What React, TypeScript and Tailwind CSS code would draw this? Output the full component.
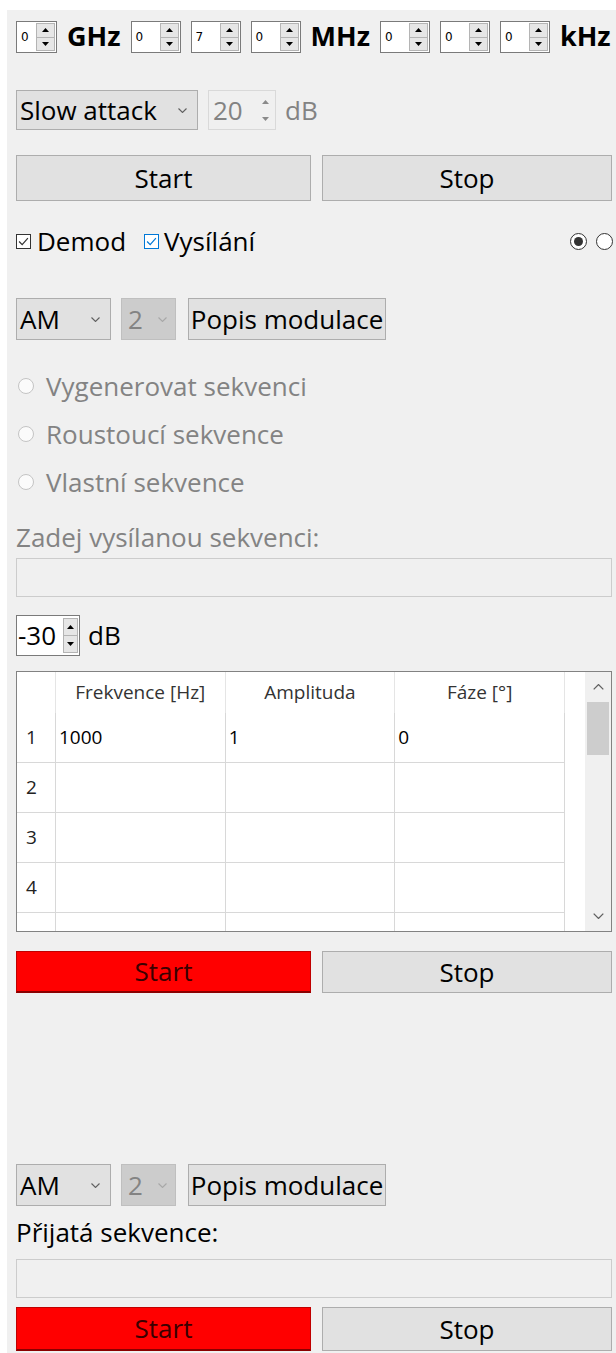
import React from 'react';

const ui = "font-['Open_Sans',sans-serif]";

// small filled triangle used inside spin box buttons
const Tri: React.FC<{ up?: boolean; color?: string }> = ({ up, color = '#000' }) => (
  <svg width="7" height="4" viewBox="0 0 7 4">
    <polygon points={up ? '0,4 3.5,0 7,4' : '0,0 7,0 3.5,4'} fill={color} />
  </svg>
);

const Chevron: React.FC<{ color?: string; up?: boolean; w?: number }> = ({ color = '#606060', up, w = 9 }) => (
  <svg width={w} height={Math.round(w / 1.8)} viewBox="0 0 9 5">
    <polyline points={up ? '0.5,4.5 4.5,0.5 8.5,4.5' : '0.5,0.5 4.5,4.5 8.5,0.5'} fill="none" stroke={color} strokeWidth="1.1" />
  </svg>
);

const Check: React.FC<{ color: string }> = ({ color }) => (
  <svg width="11" height="9" viewBox="0 0 10 8">
    <polyline points="1,4 3.8,6.8 9,1" fill="none" stroke={color} strokeWidth="1.1" />
  </svg>
);

const TinySpin: React.FC<{ value: string; className: string }> = ({ value, className }) => (
  <div className={`${className} h-[32px] flex border border-[#7a7a7a] bg-white`}>
    <span className="flex-1 pl-[4px] flex items-center text-[12px] font-['DejaVu_Sans',sans-serif] text-black">{value}</span>
    <div className="w-[19px] my-[1px] mr-[1px] flex flex-col border border-[#b4b4b4] bg-[#e6e6e6]">
      <div className="flex-1 flex items-center justify-center border-b border-[#b4b4b4]"><Tri up /></div>
      <div className="flex-1 flex items-center justify-center"><Tri /></div>
    </div>
  </div>
);

const Unit: React.FC<{ label: string }> = ({ label }) => (
  <span className="text-[27px] font-bold leading-none text-black font-['Noto_Sans',sans-serif]">{label}</span>
);

const Button: React.FC<{ label: string; className?: string }> = ({ label, className = '' }) => (
  <div className={`flex items-center justify-center border border-[#adadad] bg-[#e1e1e1] text-[26px] text-black ${className}`}>
    {label}
  </div>
);

const RedButton: React.FC<{ label: string; className?: string }> = ({ label, className = '' }) => (
  <div className={`flex items-center justify-center bg-[#ff0000] border border-[#c00000] border-b-[2px] border-b-[#8a0000] text-[26px] text-[#3a0000] ${className}`}>
    {label}
  </div>
);

const Combo: React.FC<{ label: string; className: string }> = ({ label, className }) => (
  <div className={`flex items-center border border-[#adadad] bg-[#e1e1e1] pl-[3px] pr-[10px] ${className}`}>
    <span className="flex-1 text-[26px] text-black whitespace-nowrap">{label}</span>
    <Chevron />
  </div>
);

const DisabledCombo: React.FC<{ label: string }> = ({ label }) => (
  <div className="w-[55px] h-[42px] flex items-center border border-[#bfbfbf] bg-[#cccccc] pl-[6px] pr-[8px]">
    <span className="flex-1 text-[26px] text-[#838383]">{label}</span>
    <Chevron color="#a8a8a8" />
  </div>
);

const ModRow: React.FC<{ className?: string }> = ({ className = '' }) => (
  <div className={`flex items-center ${className}`}>
    <Combo label="AM" className="w-[95px] h-[42px]" />
    <div className="ml-[10px]"><DisabledCombo label="2" /></div>
    <Button label="Popis modulace" className="ml-[12px] w-[198px] h-[42px] whitespace-nowrap" />
  </div>
);

const StartStop: React.FC<{ red?: boolean; className?: string; h: string }> = ({ red, className = '', h }) => (
  <div className={`flex gap-[11px] ${className}`}>
    {red ? <RedButton label="Start" className={`w-[295px] ${h}`} /> : <Button label="Start" className={`w-[295px] ${h}`} />}
    <Button label="Stop" className={`flex-1 ${h}`} />
  </div>
);

const DisabledRadio: React.FC<{ label: string; className?: string }> = ({ label, className = '' }) => (
  <div className={`h-[32px] flex items-center ${className}`}>
    <span className="ml-[2px] w-[16px] h-[16px] rounded-full border border-[#c4c4c4] bg-[#fbfbfb]" />
    <span className="ml-[12px] text-[26px] text-[#838383]">{label}</span>
  </div>
);

const rows = [
  ['1000', '1', '0'],
  ['', '', ''],
  ['', '', ''],
  ['', '', ''],
  ['', '', ''],
];

const Table: React.FC = () => (
  <div className="mt-[15px] h-[261px] border border-[#828282] bg-white flex overflow-hidden text-[19px]">
    <div className="w-[548px] flex flex-col">
      <div className="h-[41px] shrink-0 flex text-[#333]">
        <div className="w-[39px] border-r border-[#e5e5e5]" />
        <div className="w-[170px] border-r border-[#e5e5e5] flex items-center justify-center">Frekvence [Hz]</div>
        <div className="w-[170px] border-r border-[#e5e5e5] flex items-center justify-center">Amplituda</div>
        <div className="w-[170px] border-r border-[#e5e5e5] flex items-center justify-center">Fáze [°]</div>
      </div>
      {rows.map((r, i) => (
        <div key={i} className="h-[50px] shrink-0 flex border-b border-[#d8d8d8] text-black">
          <div className="w-[39px] pl-[9px] flex items-center border-r border-[#d8d8d8] text-[#222]">{i < 4 ? i + 1 : ''}</div>
          {r.map((c, j) => (
            <div key={j} className="w-[170px] pl-[3px] flex items-center border-r border-[#d8d8d8]">{c}</div>
          ))}
        </div>
      ))}
    </div>
    <div className="w-[20px]" />
    <div className="flex-1 bg-[#f0f0f0] flex flex-col items-center">
      <div className="h-[30px] flex items-center"><Chevron color="#606060" up w={11} /></div>
      <div className="w-[22px] h-[53px] bg-[#cdcdcd]" />
      <div className="flex-1" />
      <div className="h-[30px] flex items-center"><Chevron color="#606060" w={11} /></div>
    </div>
  </div>
);

export default function App() {
  return (
    <div className={`w-[616px] h-[1353px] bg-white pt-[10px] pl-[7px] ${ui}`}>
      <div className="h-[1343px] bg-[#f0f0f0] pt-[11px] pl-[9px] pr-[4px] flex flex-col">
        {/* frequency entry */}
        <div className="flex items-center h-[32px]">
          <TinySpin value="0" className="w-[41px]" />
          <span className="ml-[10px]"><Unit label="GHz" /></span>
          <div className="ml-[10px] flex gap-[10px]">
            <TinySpin value="0" className="w-[50px]" />
            <TinySpin value="7" className="w-[50px]" />
            <TinySpin value="0" className="w-[50px]" />
          </div>
          <span className="ml-[10px]"><Unit label="MHz" /></span>
          <div className="ml-[10px] flex gap-[10px]">
            <TinySpin value="0" className="w-[50px]" />
            <TinySpin value="0" className="w-[50px]" />
            <TinySpin value="0" className="w-[50px]" />
          </div>
          <span className="ml-[10px]"><Unit label="kHz" /></span>
        </div>

        {/* AGC */}
        <div className="mt-[37px] flex items-center h-[40px]">
          <Combo label="Slow attack" className="w-[182px] h-[40px]" />
          <div className="ml-[10px] w-[68px] h-[40px] flex border border-[#d9d9d9]">
            <span className="flex-1 pl-[4px] flex items-center text-[26px] text-[#838383]">20</span>
            <div className="w-[16px] my-[2px] mr-[2px] flex flex-col">
              <div className="flex-1 flex items-center justify-center"><Tri up color="#8a8a8a" /></div>
              <div className="flex-1 flex items-center justify-center"><Tri color="#8a8a8a" /></div>
            </div>
          </div>
          <span className="ml-[9px] text-[26px] text-[#838383]">dB</span>
        </div>

        <StartStop className="mt-[25px]" h="h-[46px]" />

        {/* options */}
        <div className="mt-[25px] h-[30px] flex items-center">
          <span className="w-[15px] h-[15px] border border-[#333] bg-white flex items-center justify-center"><Check color="#333" /></span>
          <span className="ml-[6px] text-[26px] text-black">Demod</span>
          <span className="ml-[18px] w-[15px] h-[15px] border border-[#0078d7] bg-white flex items-center justify-center"><Check color="#0078d7" /></span>
          <span className="ml-[5px] text-[26px] text-black">Vysílání</span>
          <div className="flex-1" />
          <span className="w-[17px] h-[17px] rounded-full border border-[#333] bg-white flex items-center justify-center">
            <span className="w-[9px] h-[9px] rounded-full bg-[#333]" />
          </span>
          <span className="ml-[9px] mr-[-1px] w-[17px] h-[17px] rounded-full border border-[#333] bg-white" />
        </div>

        <ModRow className="mt-[42px]" />

        <DisabledRadio label="Vygenerovat sekvenci" className="mt-[30px]" />
        <DisabledRadio label="Roustoucí sekvence" className="mt-[16px]" />
        <DisabledRadio label="Vlastní sekvence" className="mt-[16px]" />

        <div className="mt-[23px] h-[32px] flex items-center text-[26px] text-[#838383]">Zadej vysílanou sekvenci:</div>
        <div className="mt-[5px] h-[39px] border border-[#cccccc] bg-[#f0f0f0]" />

        {/* output level */}
        <div className="mt-[18px] h-[41px] flex items-center">
          <div className="w-[64px] h-[41px] flex border border-[#7a7a7a] bg-white">
            <span className="flex-1 pl-[1px] flex items-center text-[26px] text-black">-30</span>
            <div className="w-[15px] my-[2px] mr-[1px] flex flex-col border border-[#b4b4b4] bg-[#e6e6e6]">
              <div className="flex-1 flex items-center justify-center border-b border-[#b4b4b4]"><Tri up /></div>
              <div className="flex-1 flex items-center justify-center"><Tri /></div>
            </div>
          </div>
          <span className="ml-[8px] text-[26px] text-black">dB</span>
        </div>

        <Table />

        <StartStop red className="mt-[19px]" h="h-[42px]" />

        {/* receiver */}
        <ModRow className="mt-[171px]" />
        <div className="mt-[10px] h-[32px] flex items-center text-[26px] text-black">Přijatá sekvence:</div>
        <div className="mt-[11px] h-[39px] border border-[#cccccc] bg-[#f0f0f0]" />
        <StartStop red className="mt-[9px]" h="h-[44px]" />
      </div>
    </div>
  );
}
